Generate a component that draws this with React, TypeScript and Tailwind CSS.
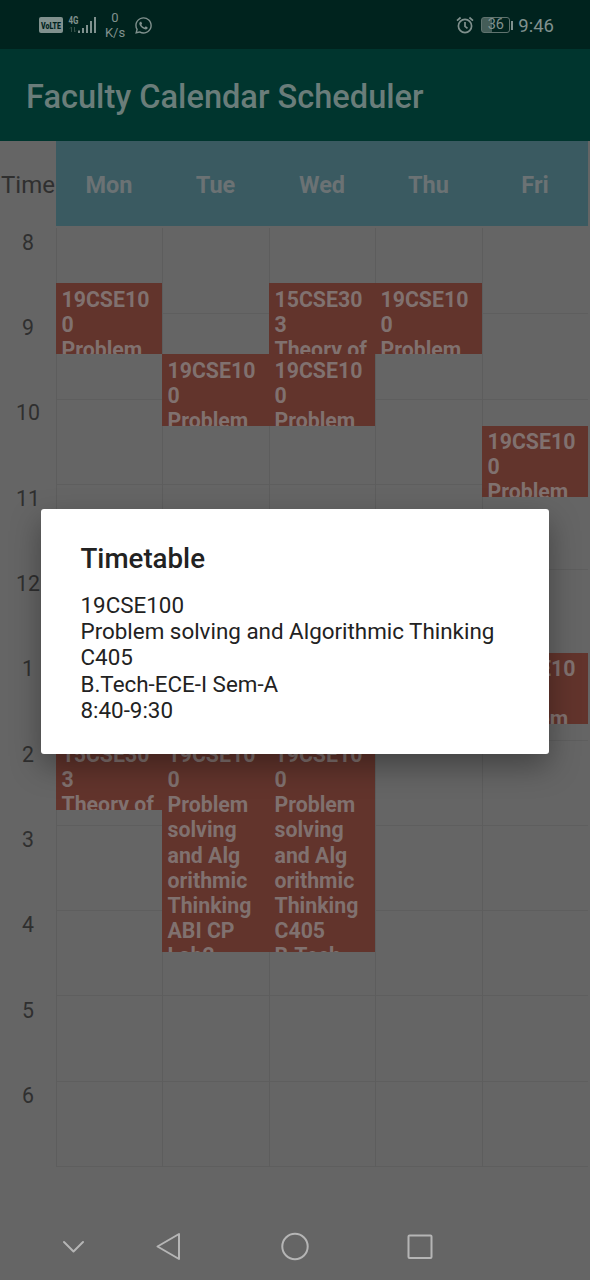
import React from "react";
import { FaWhatsapp } from "react-icons/fa";

type Session = { gap: string; height: string; lines: string[] };

const PROBLEM = ["19CSE10", "0", "Problem"];
const THEORY = ["15CSE30", "3", "Theory of"];
const LAB = ["19CSE10", "0", "Problem", "solving", "and Alg", "orithmic", "Thinking"];

const days: { name: string; width: string; sessions: Session[] }[] = [
  {
    name: "Mon",
    width: "w-[106px]",
    sessions: [
      { gap: "mt-[55px]", height: "h-[71px] pt-[3.500px]", lines: PROBLEM },
      { gap: "mt-[385px]", height: "h-[71px] pt-[3px]", lines: THEORY },
    ],
  },
  {
    name: "Tue",
    width: "w-[107px]",
    sessions: [
      { gap: "mt-[126px]", height: "h-[72px] pt-[3.500px]", lines: PROBLEM },
      { gap: "mt-[313px]", height: "h-[213px] pt-[3px]", lines: [...LAB, "ABI CP", "Lab2"] },
    ],
  },
  {
    name: "Wed",
    width: "w-[106px]",
    sessions: [
      { gap: "mt-[55px]", height: "h-[71px] pt-[3.500px]", lines: THEORY },
      { gap: "mt-0", height: "h-[72px] pt-[3.500px]", lines: PROBLEM },
      { gap: "mt-[313px]", height: "h-[213px] pt-[3px]", lines: [...LAB, "C405", "B.Tech-"] },
    ],
  },
  {
    name: "Thu",
    width: "w-[107px]",
    sessions: [{ gap: "mt-[55px]", height: "h-[71px] pt-[3.500px]", lines: PROBLEM }],
  },
  {
    name: "Fri",
    width: "w-[106px]",
    sessions: [
      { gap: "mt-[198px]", height: "h-[71px] pt-[3px]", lines: PROBLEM },
      { gap: "mt-[156px]", height: "h-[71px] pt-[3px]", lines: PROBLEM },
    ],
  },
];

const hours = ["8", "9", "10", "11", "12", "1", "2", "3", "4", "5", "6"];

function StatusBar() {
  return (
    <div className="flex h-[49px] items-center bg-[#00231e] pl-[39px] pr-[36px] pt-px text-[#80918e]">
      <svg className="h-4 w-6" viewBox="0 0 24 16">
        <rect width="24" height="16" rx="2" fill="#80918e" />
        <text x="2" y="11.500" fontSize="9.500" fontWeight="900" fill="#00231e" textLength="20" lengthAdjust="spacingAndGlyphs">
          VoLTE
        </text>
      </svg>
      <svg className="ml-[5px] h-[20px] w-[30px]" viewBox="0 0 30 20" fill="currentColor">
        <text x="0.500" y="9" fontSize="10" fontWeight="700" textLength="10" lengthAdjust="spacingAndGlyphs">4G</text>
        <path d="M3.500 12v5M2 13.500 3.500 12M6.500 12v5M6.500 17l1.500-1.500" stroke="#345048" fill="none" />
        <path d="M10 15.500h2V18h-2zM14 13h2v5h-2zM18 10h2v8h-2zM22 6h2v12h-2zM26 2h2v16h-2z" />
      </svg>
      <div className="ml-[7px] flex w-5 flex-col items-center text-[13px] leading-[15px]">
        <span>0</span>
        <span>K/s</span>
      </div>
      <FaWhatsapp className="ml-[8.500px] h-[19px] w-[19px]" />
      <div className="ml-auto flex items-center">
        <svg className="h-[18px] w-[18px]" viewBox="0 0 18 18" fill="none" stroke="currentColor" strokeWidth="1.700">
          <circle cx="9" cy="10" r="6.600" />
          <path d="M9 6v4.300l2.500 2M1 4.600 4.600 1.500M17 4.600 13.400 1.500" />
        </svg>
        <div className="ml-[7px] flex h-[16px] w-[29px] items-center justify-center rounded-[3px] border border-[#60736f] bg-linear-to-r from-[#445d58] from-36% to-transparent to-36% pt-px text-[14.500px] leading-none">
          36
        </div>
        <div className="ml-px h-[9px] w-[2px] bg-[#80918e]" />
        <span className="ml-[5px] pt-[2px] text-[18.500px] leading-none">9:46</span>
      </div>
    </div>
  );
}

function DayColumn({ day }: { day: (typeof days)[number] }) {
  return (
    <div className={`shrink-0 ${day.width}`}>
      <div className="flex h-[85px] items-center justify-center bg-[#3a5a61] pt-[4px] text-[23.500px] font-bold text-[#6b7274]">
        {day.name}
      </div>
      <div className="grid pt-[2px]">
        <div className="col-start-1 row-start-1 border-l border-[#5d5d5d] pt-px">
          {hours.map((h) => (
            <div key={h} className="h-[85.250px] border-b border-[#5e5e5e]" />
          ))}
        </div>
        <div className="col-start-1 row-start-1">
          {day.sessions.map((s, i) => (
            <div
              key={i}
              className={`overflow-hidden whitespace-nowrap bg-[#62342c] pl-[5.500px] text-[21.300px] font-bold leading-[25.150px] text-[#80716f] ${s.gap} ${s.height}`}
            >
              {s.lines.map((line, n) => (
                <div key={n}>{line}</div>
              ))}
            </div>
          ))}
        </div>
      </div>
    </div>
  );
}

function Timetable() {
  return (
    <main className="flex h-[1072px] pr-[2px]">
      <div className="w-14 shrink-0 text-center text-[#2f2f2f]">
        <div className="flex h-[85px] items-center justify-center pt-[3px] text-[24px]">Time</div>
        {hours.map((h) => (
          <div key={h} className="h-[85.350px] pt-[3.700px] text-[21.300px] leading-[26px]">
            {h}
          </div>
        ))}
      </div>
      {days.map((day) => (
        <DayColumn key={day.name} day={day} />
      ))}
    </main>
  );
}

function NavigationBar() {
  return (
    <svg className="block h-[67px] w-full" viewBox="0 0 590 67" fill="none" stroke="#b5b5b5" strokeWidth="2" strokeLinejoin="round" strokeLinecap="round">
      <path d="M64 29l9.500 9.500L83 29" />
      <path d="M179 21v25L157.500 33.500z" />
      <circle cx="295" cy="33.500" r="12.700" />
      <rect x="408.500" y="22.500" width="23" height="22.500" rx="1" />
    </svg>
  );
}

function TimetableDialog() {
  return (
    <section
      role="dialog"
      className="absolute left-[41px] top-[509px] h-[245px] w-[508px] rounded-[3px] bg-white pl-[39.500px] pt-[33px] text-[#222] shadow-[0_12px_30px_rgba(0,0,0,0.34)]"
    >
      <h2 className="text-[27.700px] font-medium leading-[34px]">Timetable</h2>
      <div className="mt-[16px] whitespace-nowrap text-[22.400px] leading-[26.200px]">
        <p>19CSE100</p>
        <p>Problem solving and Algorithmic Thinking</p>
        <p>C405</p>
        <p>B.Tech-ECE-I Sem-A</p>
        <p>8:40-9:30</p>
      </div>
    </section>
  );
}

export default function App() {
  return (
    <div className="relative h-[1280px] w-[590px] overflow-hidden bg-[#656565] font-[Roboto,sans-serif]">
      <StatusBar />
      <header className="flex h-[92px] items-center bg-[#00352e] pl-[26px] pt-[5px] text-[32.600px] font-medium text-[#6a7d7a]">
        Faculty Calendar Scheduler
      </header>
      <Timetable />
      <NavigationBar />
      <TimetableDialog />
    </div>
  );
}
